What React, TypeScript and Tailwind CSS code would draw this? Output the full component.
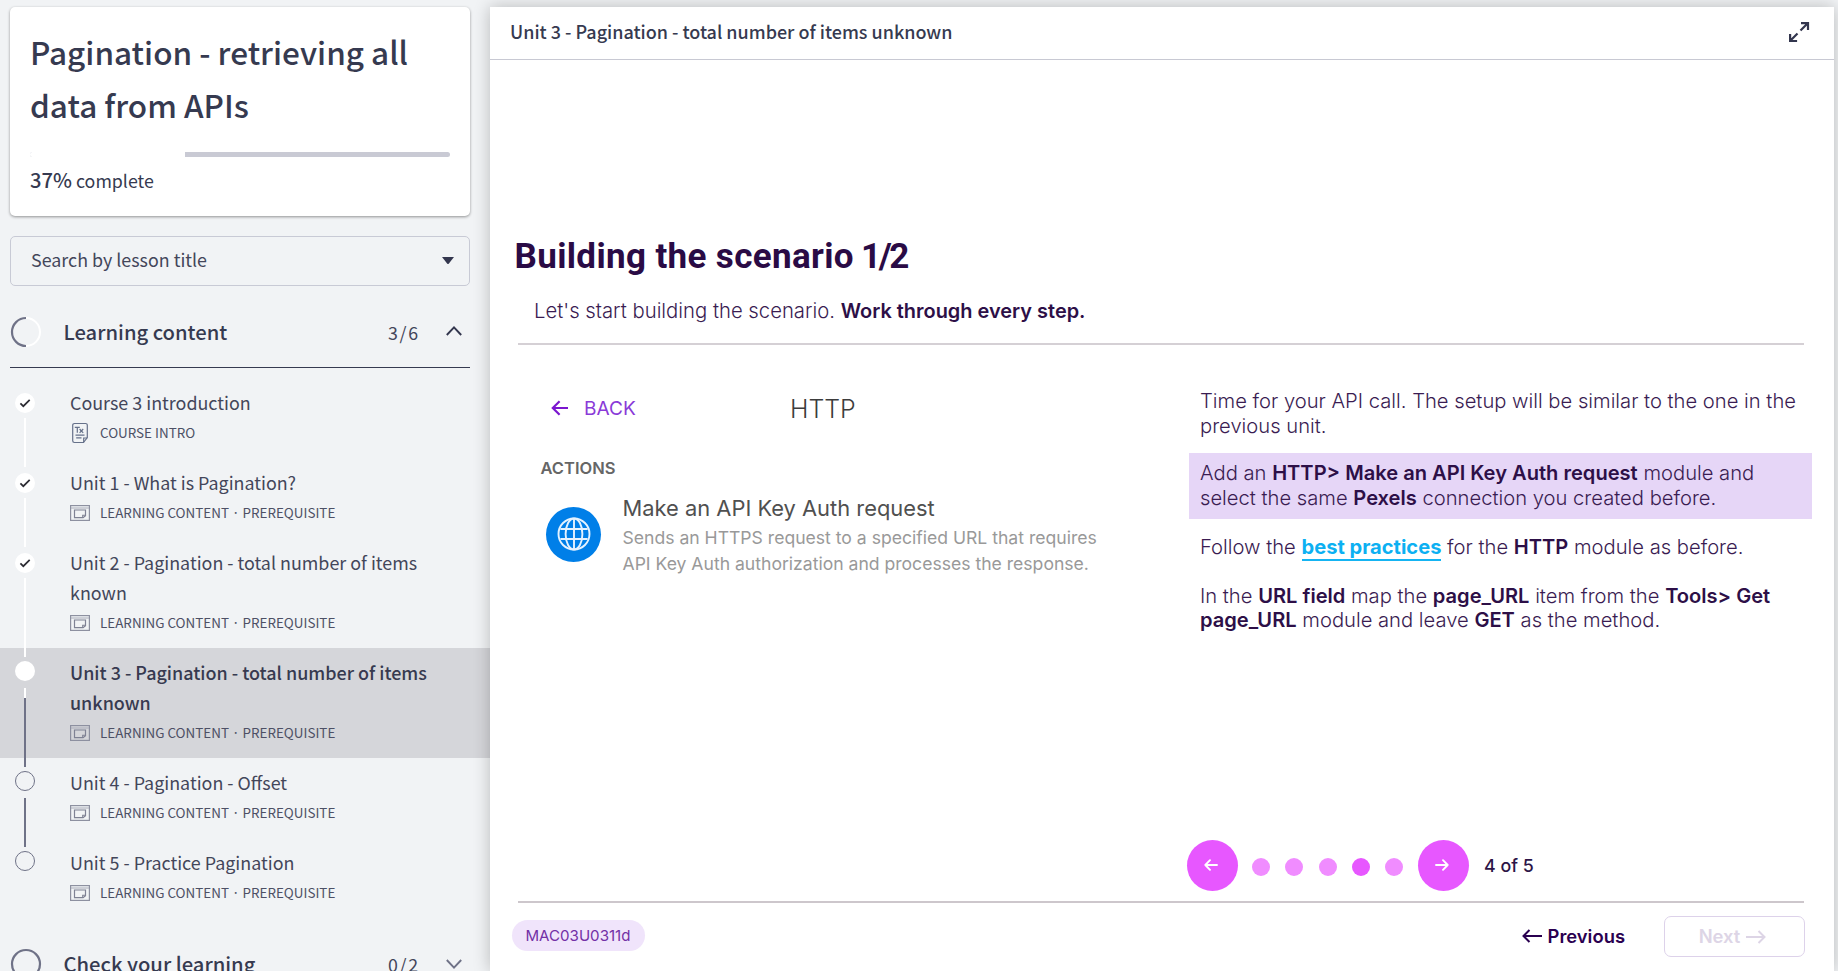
import type { ReactNode } from "react";

type Status = "done" | "current" | "todo";

type Lesson = {
  title: string;
  kind: "intro" | "content";
  label: string;
  status: Status;
  last?: boolean;
};

const lessons: Lesson[] = [
  { title: "Course 3 introduction", kind: "intro", label: "COURSE INTRO", status: "done" },
  { title: "Unit 1 - What is Pagination?", kind: "content", label: "LEARNING CONTENT · PREREQUISITE", status: "done" },
  { title: "Unit 2 - Pagination - total number of items known", kind: "content", label: "LEARNING CONTENT · PREREQUISITE", status: "done" },
  { title: "Unit 3 - Pagination - total number of items unknown", kind: "content", label: "LEARNING CONTENT · PREREQUISITE", status: "current" },
  { title: "Unit 4 - Pagination - Offset", kind: "content", label: "LEARNING CONTENT · PREREQUISITE", status: "todo" },
  { title: "Unit 5 - Practice Pagination", kind: "content", label: "LEARNING CONTENT · PREREQUISITE", status: "todo", last: true },
];

function IntroIcon() {
  return (
    <svg width="20" height="22" viewBox="0 0 20 22" fill="none" stroke="#66718a" strokeWidth="1.2">
      <path d="M17.3 15.5V3.2a1.7 1.7 0 0 0-1.7-1.7H4.4a1.7 1.7 0 0 0-1.7 1.7v15.6a1.7 1.7 0 0 0 1.7 1.7h9.1l3.8-5z" />
      <path d="M17.3 16h-3.6v4.3" />
      <path d="M4.8 5.4h5M7.3 5.4v5.4M9.6 7l3.6 3.8M13.2 7l-3.6 3.8M5.5 13.2h9M6.2 15.9h5.3" />
    </svg>
  );
}

function ContentIcon() {
  return (
    <svg width="20" height="16" viewBox="0 0 20 16" fill="none">
      <rect x="0.6" y="0.6" width="18.8" height="14.8" stroke="#8d90a0" strokeWidth="1.2" />
      <path d="M1 3h18" stroke="#a9abb8" strokeWidth="1" />
      <path d="M4.5 5h11v5.6l-2.4 2H4.5z" stroke="#7f8294" strokeWidth="1.2" />
      <path d="M15.5 10.2h-2.8v2.4" stroke="#7f8294" strokeWidth="1.1" />
    </svg>
  );
}

function Marker({ status }: { status: Status }) {
  if (status === "done") {
    return (
      <svg className="shrink-0" width="20" height="20" viewBox="0 0 20 20" fill="none">
        <circle cx="10" cy="10" r="10" fill="#fff" />
        <path d="M5.4 10.4l2.9 2.8 6.4-6.4" stroke="#2c2c33" strokeWidth="1.7" />
      </svg>
    );
  }
  if (status === "current") return <div className="size-5 shrink-0 rounded-full bg-white" />;
  return <div className="size-5 shrink-0 rounded-full border border-[#6f7287]" />;
}

function LessonRow({ lesson }: { lesson: Lesson }) {
  const done = lesson.status === "done";
  const current = lesson.status === "current";
  return (
    <div className={current ? "flex bg-[#d5d6da]" : "flex"}>
      <div className={done ? "flex w-[50px] shrink-0 flex-col items-center pt-[15px]" : "flex w-[50px] shrink-0 flex-col items-center pt-[13px]"}>
        <Marker status={lesson.status} />
        {!lesson.last && (
          <div
            className={
              done
                ? "relative z-10 mt-[5px] -mb-[9px] w-0.5 flex-1 bg-white"
                : current
                  ? "relative z-10 mt-[7px] -mb-[9px] w-0.5 flex-1 border-t-[10px] border-white bg-[#6f7287]"
                  : "relative z-10 mt-[7px] -mb-[9px] w-0.5 flex-1 bg-[#6f7287]"
            }
          />
        )}
      </div>
      <div className="w-[390px] pt-[9px] pb-[11px] pl-5">
        <div
          className={
            current
              ? "text-[17.95px] leading-[30px] font-medium text-[#373a50]"
              : "text-[17.9px] leading-[30px] text-[#43465a]"
          }
        >
          {lesson.title}
        </div>
        <div className="flex h-[30px] items-center">
          <div className="mt-[2px] flex w-[30px] shrink-0">{lesson.kind === "intro" ? <IntroIcon /> : <ContentIcon />}</div>
          <span className="text-[13.43px] leading-[30px] whitespace-nowrap text-[#4d5065]">{lesson.label}</span>
        </div>
      </div>
    </div>
  );
}

function Sidebar() {
  return (
    <aside className="w-[490px] shrink-0 pt-[7px] font-['Noto_Sans_CJK_JP',sans-serif] text-[#363a50]">
      <div className="mr-5 ml-2.5 h-[209px] rounded-[5px] bg-white px-[20px] pt-[18px] shadow-[0_1px_3px_rgba(0,0,0,0.4)]">
        <h1 className="text-[31.5px] leading-[53px] font-medium">
          Pagination - retrieving all
          <br />
          data from APIs
        </h1>
        <div className="mt-[21px] flex h-[5px] overflow-hidden rounded-full bg-[#c9cad4]">
          <div className="h-full w-[155px] bg-white" />
        </div>
        <p className="mt-[7px] text-[17.8px] leading-[32px]">
          <span className="text-[20.2px] font-medium">37%</span> complete
        </p>
      </div>

      <div className="mt-5 mr-5 ml-2.5 flex h-[50px] items-center justify-between rounded-[5px] border border-[#c8cad5] pr-[15px] pl-[20px]">
        <span className="-mt-[3px] text-[17.88px] text-[#43465a]">Search by lesson title</span>
        <svg width="12" height="7" viewBox="0 0 12 7" className="-mt-px">
          <path d="M0 0h12L6.9 6.4a1.2 1.2 0 0 1-1.8 0z" fill="#33364e" />
        </svg>
      </div>

      <div className="mt-[6px] mr-5 ml-2.5 flex h-[76px] items-center border-b border-[#363a50] pt-0.5">
        <svg width="32" height="32" viewBox="0 0 32 32" fill="none" className="mt-[2px]">
          <circle cx="16" cy="16" r="14" stroke="#fff" strokeWidth="2" />
          <path d="M16 2a14 14 0 0 0 0 28" stroke="#6f7287" strokeWidth="2.2" />
        </svg>
        <h2 className="mt-[4px] ml-[21.5px] flex-1 text-[20.2px] font-medium">Learning content</h2>
        <span className="mt-[3px] mr-[25px] text-[17.8px] tracking-[1.8px] text-[#43465a]">3/6</span>
        <svg width="18" height="12" viewBox="0 0 18 12" fill="none" className="mt-px mr-[7px]">
          <path d="M1.8 10L9 2.4l7.2 7.6" stroke="#33364e" strokeWidth="1.9" />
        </svg>
      </div>

      <div className="mt-[10px]">
        {lessons.map((lesson) => (
          <LessonRow key={lesson.title} lesson={lesson} />
        ))}
      </div>

      <div className="mt-[18px] mr-5 ml-2.5 flex h-[60px] items-center">
        <svg width="32" height="32" viewBox="0 0 32 32" fill="none" className="-mt-[4px]">
          <circle cx="16" cy="16" r="14" stroke="#6f7287" strokeWidth="2.2" />
        </svg>
        <h2 className="-mt-[6px] ml-[21.5px] flex-1 text-[20.2px] leading-[29px] font-medium">Check your learning</h2>
        <span className="-mt-[5px] mr-[25px] text-[17.8px] leading-[26px] tracking-[1.8px] text-[#43465a]">0/2</span>
        <svg width="18" height="12" viewBox="0 0 18 12" fill="none" className="-mt-1 mr-[7px]">
          <path d="M1.8 2L9 9.6 16.2 2" stroke="#6f7287" strokeWidth="1.9" />
        </svg>
      </div>
    </aside>
  );
}

function Arrow({ left, className }: { left?: boolean; className: string }) {
  return (
    <svg viewBox="0 0 20 14" fill="none" stroke="currentColor" strokeWidth="2" className={className}>
      {left ? <path d="M20 7H1.5M7.5 1l-6 6 6 6" /> : <path d="M0 7h18.5M12.5 1l6 6-6 6" />}
    </svg>
  );
}

function RoundArrow({ left }: { left?: boolean }) {
  return (
    <button className="flex size-[51px] shrink-0 items-center justify-center rounded-full bg-[#e757ff] pr-[3px]">
      <svg width="14" height="12" viewBox="0 0 14 12" fill="none" stroke="#fff" strokeWidth="1.9" strokeLinecap="round" strokeLinejoin="round" className="-mt-0.5">
        {left ? <path d="M13 6H1.3M6 1.2L1.3 6 6 10.8" /> : <path d="M1 6h11.7M8 1.2L12.7 6 8 10.8" />}
      </svg>
    </button>
  );
}

function B({ children }: { children: ReactNode }) {
  return <strong className="text-[20.1px] font-semibold text-[#2d0f47]">{children}</strong>;
}

function ModulePreview() {
  return (
    <div className="w-[699px] shrink-0 pt-[48px]">
      <div className="flex h-[30px] pl-[61px]">
        <svg width="18" height="16" viewBox="0 0 18 16" fill="none" stroke="#7b16cf" strokeWidth="2.2" className="mt-[7px]">
          <path d="M17 8H2M8.6 1.2L1.8 8l6.8 6.8" />
        </svg>
        <span className="ml-[15px] w-[206px] text-[19.1px] leading-[30px] text-[#8a3ad8]">BACK</span>
        <span className="mt-px text-[24.9px] leading-[30px] font-light text-[#3c3c3c]">HTTP</span>
      </div>
      <div className="mt-[33px] pl-[50.5px] text-[16.5px] leading-6 font-semibold text-[#666]">ACTIONS</div>
      <div className="mt-[13px] flex pl-[56px]">
        <div className="mt-[13.5px] flex size-[55px] items-center justify-center rounded-full bg-[#007fe8]">
          <svg width="34" height="34" viewBox="0 0 34 34" fill="none" stroke="#e4f2ff" strokeWidth="1.9">
            <circle cx="17" cy="17" r="15.5" />
            <ellipse cx="17" cy="17" rx="8.4" ry="15.5" />
            <path d="M17 1.5v31M3.4 12h27.2M3.4 22h27.2" />
          </svg>
        </div>
        <div className="ml-[21.5px] whitespace-nowrap">
          <div className="text-[21.88px] leading-[30px] text-[#505050]">Make an API Key Auth request</div>
          <div className="mt-[1.5px] text-[17.58px] leading-[26px] text-[#999]">
            Sends an HTTPS request to a specified URL that requires
            <br />
            API Key Auth authorization and processes the response.
          </div>
        </div>
      </div>
    </div>
  );
}

function Instructions() {
  return (
    <div className="flex flex-1 flex-col justify-between pb-[10px]">
      <div className="w-[623px] pt-[43px] text-[20.2px] leading-[25px] font-light whitespace-nowrap text-[#3a1c52]">
        <p className="px-[11px]">
          Time for your API call. The setup will be similar to the one in the
          <br />
          previous unit.
        </p>
        <p className="mt-[15px] h-[66px] bg-[#e6d6f7] px-[11px] pt-[8px] leading-[24.5px]">
          Add an <B>HTTP&gt; Make an API Key Auth request</B> module and
          <br />
          select the same <B>Pexels</B> connection you created before.
        </p>
        <p className="mt-[15px] px-[11px]">
          Follow the{" "}
          <a className="border-b-2 border-[#15b4f2] text-[20.1px] font-bold text-[#0cb0f2]">best practices</a> for the <B>HTTP</B> module as before.
        </p>
        <p className="mt-[24px] px-[11px] leading-[24px]">
          In the <B>URL field</B> map the <B>page_URL</B> item from the <B>Tools&gt; Get</B>
          <br />
          <B>page_URL</B> module and leave <B>GET</B> as the method.
        </p>
      </div>
      <div className="-ml-[2px] flex items-center">
        <RoundArrow left />
        <div className="mt-[3px] ml-[14px] flex w-[151px] justify-between">
          <span className="size-[18px] rounded-full bg-[#f08cff]" />
          <span className="size-[18px] rounded-full bg-[#f08cff]" />
          <span className="size-[18px] rounded-full bg-[#f08cff]" />
          <span className="size-[18px] rounded-full bg-[#e757ff]" />
          <span className="size-[18px] rounded-full bg-[#f08cff]" />
        </div>
        <div className="ml-[15px] flex">
          <RoundArrow />
        </div>
        <span className="ml-[15px] text-[17.8px] leading-6 font-medium text-[#2d1547]">4 of 5</span>
      </div>
    </div>
  );
}

export default function App() {
  return (
    <div className="flex h-[971px] w-full overflow-hidden bg-[#f1f3f5]">
      <Sidebar />
      <main className="relative z-20 mt-[7px] mr-1 flex h-[964px] flex-1 flex-col bg-white font-[Inter,sans-serif] shadow-[0_0_16px_rgba(0,0,0,0.24)]">
        <header className="flex h-[53px] shrink-0 items-center justify-between border-b border-[#c8c9d3] pr-[24px] pl-[20px]">
          <span className="pb-[3px] font-['Noto_Sans_CJK_JP',sans-serif] text-[17.98px] font-medium text-[#363a50]">
            Unit 3 - Pagination - total number of items unknown
          </span>
          <svg width="22" height="22" viewBox="0 0 22 22" fill="none" stroke="#33364e" strokeWidth="2.2" className="mb-[2px]">
            <path d="M12.5 9.5l7-7M13 2.1h7v7M9.5 12.5l-7 7M2.1 13v7h7" />
          </svg>
        </header>

        <div className="flex-1 pt-[175px]">
          <h1 className="pl-[24.5px] font-[Roboto,sans-serif] text-[35px] leading-[44px] font-bold tracking-[0.35px] text-[#2a0b45]">
            Building the scenario <span className="-ml-[2px] tracking-[-2.4px]">1/2</span>
          </h1>
          <p className="mt-[17px] pl-[44px] text-[20.3px] leading-[30px] font-light text-[#3a1c52]">
            Let's start building the scenario. <strong className="text-[19.95px] font-semibold text-[#2d0f47]">Work through every step.</strong>
          </p>
          <div className="mt-[17px] mr-[30px] ml-[28px] h-[2px] bg-[#d5d0d5]" />
          <div className="flex h-[556px]">
            <ModulePreview />
            <Instructions />
          </div>
          <div className="mr-[30px] ml-[28px] h-[1.5px] bg-[#cdc7cc]" />
          <footer className="flex items-center justify-between pt-[13.5px] pr-[29px] pl-[22px]">
            <span className="-mt-[2px] flex h-[31px] w-[133px] items-center justify-center rounded-full bg-[#f0e4fb] pt-[2px] pr-px text-[15.1px] text-[#7330a6]">
              MAC03U0311d
            </span>
            <div className="flex items-center">
              <div className="flex items-center text-[18.4px] font-semibold text-[#2a0050]">
                <Arrow left className="mr-[6px] h-[14px] w-5" />
                Previous
              </div>
              <div className="ml-[39px] flex h-[41px] w-[141px] items-center justify-center rounded-[7px] border-[1.5px] border-[#ddd2ea] pr-[4px] text-[18.4px] font-semibold text-[#ddd5e6]">
                Next
                <Arrow className="ml-[6px] h-[14px] w-5" />
              </div>
            </div>
          </footer>
        </div>
      </main>
    </div>
  );
}
